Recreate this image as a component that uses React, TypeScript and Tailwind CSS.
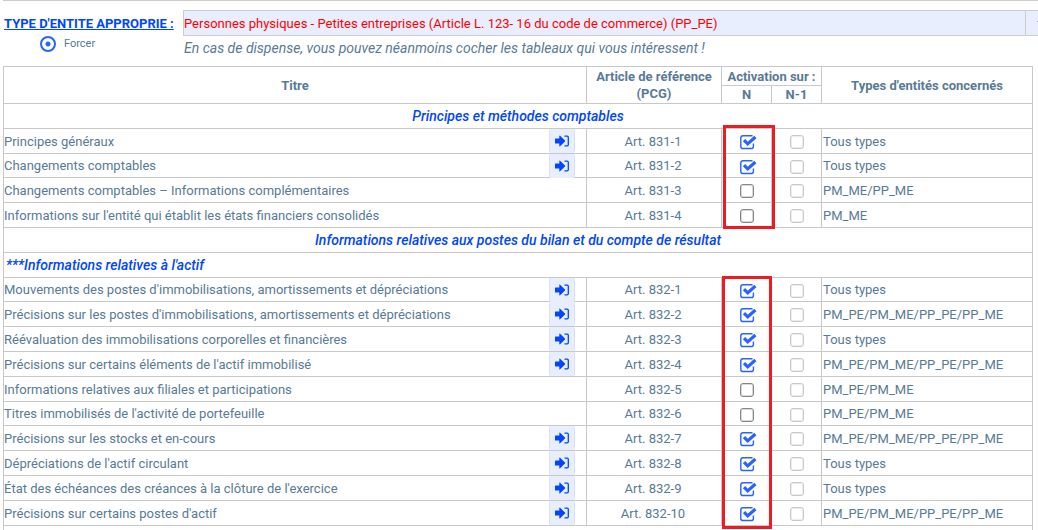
import { useState } from "react";

type Row = {
  title: string;
  article: string;
  types: string;
  link?: boolean;
  checked?: boolean;
  // hauteur du cadre rouge qui démarre sur cette ligne
  frame?: "short" | "long";
};

const ALL = "Tous types";
const PM = "PM_PE/PM_ME";
const PM_PP = "PM_PE/PM_ME/PP_PE/PP_ME";

const GENERAL_ROWS: Row[] = [
  { title: "Principes généraux", article: "831-1", types: ALL, link: true, checked: true, frame: "short" },
  { title: "Changements comptables", article: "831-2", types: ALL, link: true, checked: true },
  { title: "Changements comptables – Informations complémentaires", article: "831-3", types: "PM_ME/PP_ME" },
  { title: "Informations sur l'entité qui établit les états financiers consolidés", article: "831-4", types: "PM_ME" },
];

const ASSET_ROWS: Row[] = [
  { title: "Mouvements des postes d'immobilisations, amortissements et dépréciations", article: "832-1", types: ALL, link: true, checked: true, frame: "long" },
  { title: "Précisions sur les postes d'immobilisations, amortissements et dépréciations", article: "832-2", types: PM_PP, link: true, checked: true },
  { title: "Réévaluation des immobilisations corporelles et financières", article: "832-3", types: ALL, link: true, checked: true },
  { title: "Précisions sur certains éléments de l'actif immobilisé", article: "832-4", types: PM_PP, link: true, checked: true },
  { title: "Informations relatives aux filiales et participations", article: "832-5", types: PM },
  { title: "Titres immobilisés de l'activité de portefeuille", article: "832-6", types: PM },
  { title: "Précisions sur les stocks et en-cours", article: "832-7", types: PM_PP, link: true, checked: true },
  { title: "Dépréciations de l'actif circulant", article: "832-8", types: ALL, link: true, checked: true },
  { title: "État des échéances des créances à la clôture de l'exercice", article: "832-9", types: ALL, link: true, checked: true },
  { title: "Précisions sur certains postes d'actif", article: "832-10", types: PM_PP, link: true, checked: true },
];

function EnterIcon() {
  return (
    <svg viewBox="0 0 14 12" className="h-3 w-3.5" aria-hidden="true">
      <path d="M0 4.1Q0 3.5.6 3.5H4.3V1.2Q4.3.2 5.1.8L10 5.4Q10.5 6 10 6.6L5.1 11.2Q4.3 11.8 4.3 10.8V8.5H.6Q0 8.5 0 7.9Z" fill="#0046fe" />
      <path d="M9.5 1.1H12.2Q13.3 1.1 13.3 2.2V9.8Q13.3 10.9 12.2 10.9H9.5" fill="none" stroke="#0046fe" strokeWidth="1.3" />
    </svg>
  );
}

function CheckBox({
  label,
  defaultChecked = false,
  disabled = false,
}: {
  label: string;
  defaultChecked?: boolean;
  disabled?: boolean;
}) {
  return (
    <span className="relative mt-0.5 block size-3.5">
      <input
        type="checkbox"
        aria-label={label}
        defaultChecked={defaultChecked}
        disabled={disabled}
        className="peer block size-3.5 appearance-none rounded-[3px] border border-[#858585] bg-white ring-1 ring-[#858585]/30 ring-inset checked:border-transparent checked:ring-0 disabled:border-[#c8c8c8] disabled:ring-[#c8c8c8]/30"
      />
      <svg
        viewBox="0 0 17 15"
        className="pointer-events-none absolute top-0 left-0 hidden h-[15px] w-[17px] peer-checked:block"
        aria-hidden="true"
      >
        <path d="M12.6.9Q12 .7 11.3.7H3Q.8.7.8 2.9V11.4Q.8 13.5 3 13.5H11.3Q13.4 13.5 13.4 11.4V8.6" fill="none" stroke="#2962ff" strokeWidth="1.4" />
        <path d="M4 5.2L7.7 8.9L15.4 2" fill="none" stroke="#2962ff" strokeWidth="3.2" />
      </svg>
    </span>
  );
}

function DataRow({ row }: { row: Row }) {
  return (
    <tr className="h-[25px]">
      <td>
        <div className="flex h-6 items-center justify-between pr-[11px]">
          <span>{row.title}</span>
          {row.link && (
            <button
              type="button"
              aria-label={`Ouvrir ${row.title}`}
              className="flex h-6 w-[26px] items-center justify-center rounded-xs border-x border-[#d8e0f8] bg-[#e8eefe]"
            >
              <EnterIcon />
            </button>
          )}
        </div>
      </td>
      <td className="pr-0.5 text-center">Art. {row.article}</td>
      <td className="relative">
        <div className="flex justify-center pl-0.5">
          <CheckBox label={`${row.title} N`} defaultChecked={row.checked} />
        </div>
        {row.frame === "short" && (
          <span className="pointer-events-none absolute -top-1 left-px z-10 h-[104px] w-[52px] border-3 border-[#ed1c24]" />
        )}
        {row.frame === "long" && (
          <span className="pointer-events-none absolute -top-0.5 left-0 z-10 h-[253px] w-[50px] border-3 border-[#ed1c24]" />
        )}
      </td>
      <td>
        <div className="flex justify-center pl-0.5">
          <CheckBox label={`${row.title} N-1`} disabled />
        </div>
      </td>
      <td className="pl-px">{row.types}</td>
    </tr>
  );
}

function SectionRow({ title }: { title: string }) {
  return (
    <tr className="h-[25px]">
      <td colSpan={5} className="text-center text-[14px] font-medium text-[#0046fe] italic">
        {title}
      </td>
    </tr>
  );
}

export default function App() {
  const [entity, setEntity] = useState("PP_PE");

  return (
    <main className="overflow-hidden bg-white pl-[3px] font-[Roboto,sans-serif] text-[13px] leading-[17px] text-[#587a96]">
      <div className="border-t border-[#ccc] pt-[9px]">
        <div className="flex">
          <div className="w-[180px] shrink-0 pt-[5px]">
            <label htmlFor="entity" className="block pl-px font-bold text-[#0046fe] underline">
              TYPE D'ENTITE APPROPRIE :
            </label>
            <label className="mt-[3px] flex items-center gap-2 pl-[37px] text-[11px]">
              <input
                type="radio"
                name="mode"
                defaultChecked
                className="size-4 appearance-none rounded-full border-2 border-[#2962ff] bg-[radial-gradient(circle,#2962ff_2px,white_3px)]"
              />
              Forcer
            </label>
          </div>
          <div className="min-w-0 flex-1">
            <div className="flex h-[26px] overflow-hidden border-y border-l border-[#ccc] bg-[#e8eefe]">
              <select
                id="entity"
                value={entity}
                onChange={(event) => setEntity(event.target.value)}
                className="min-w-0 flex-1 appearance-none text-[13px] text-[#f00] outline-none"
              >
                <option value="PP_PE">
                  Personnes physiques - Petites entreprises (Article L. 123- 16 du code de commerce) (PP_PE)
                </option>
              </select>
              <span className="flex w-[13px] items-center overflow-hidden border-l border-[#ccc] pl-[11px]">
                <svg viewBox="0 0 8 5" className="h-[5px] w-2 shrink-0" aria-hidden="true">
                  <path d="M0 0H8L4 5Z" fill="#587a96" />
                </svg>
              </span>
            </div>
            <p className="mt-1 pl-px text-[14px] italic">
              En cas de dispense, vous pouvez néanmoins cocher les tableaux qui vous intéressent !
            </p>
          </div>
        </div>
      </div>

      <div className="mt-[9px] pr-[5px]">
        <table className="w-full table-fixed border-collapse [&_td]:border [&_td]:border-[#c8c8c8] [&_td]:py-0 [&_th]:border [&_th]:border-[#c8c8c8] [&_th]:font-bold">
          <colgroup>
            <col />
            <col className="w-[135px]" />
            <col className="w-[50px]" />
            <col className="w-[50px]" />
            <col className="w-[211px]" />
          </colgroup>
          <thead>
            <tr className="h-[19px]">
              <th rowSpan={2}>Titre</th>
              <th rowSpan={2}>
                Article de référence
                <br />
                (PCG)
              </th>
              <th colSpan={2}>Activation sur :</th>
              <th rowSpan={2}>Types d'entités concernés</th>
            </tr>
            <tr className="h-[18px]">
              <th>N</th>
              <th>N-1</th>
            </tr>
          </thead>
          <tbody className="[&>tr:nth-child(5n+3)]:h-6 [&>tr:nth-child(5n+3)_div]:max-h-[23px]">
            <SectionRow title="Principes et méthodes comptables" />
            {GENERAL_ROWS.map((row) => (
              <DataRow key={row.article} row={row} />
            ))}
            <SectionRow title="Informations relatives aux postes du bilan et du compte de résultat" />
            <tr className="h-[25px]">
              <td colSpan={5} className="pl-0.5 text-[14px] font-medium text-[#0046fe] italic">
                ***Informations relatives à l'actif
              </td>
            </tr>
            {ASSET_ROWS.map((row) => (
              <DataRow key={row.article} row={row} />
            ))}
            <tr className="h-1">
              <td colSpan={5} className="border-b-0!" />
            </tr>
          </tbody>
        </table>
      </div>
    </main>
  );
}
